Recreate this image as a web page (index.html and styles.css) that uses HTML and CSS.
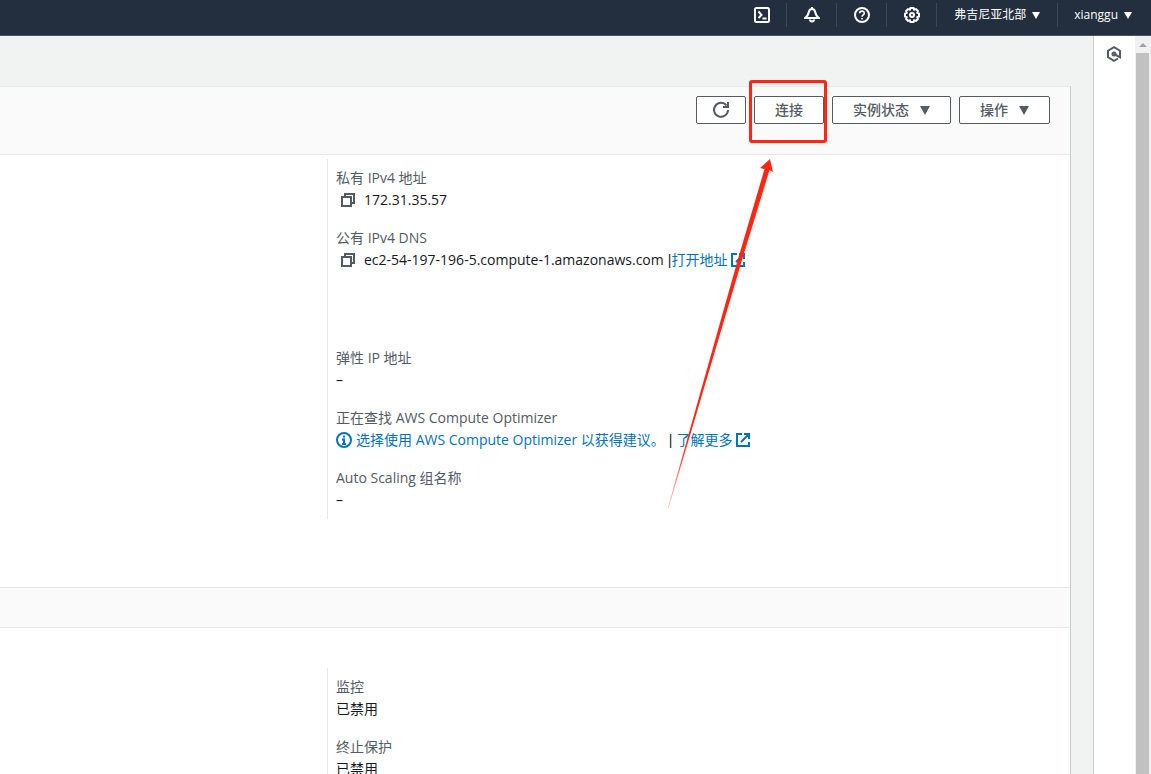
FILE: index.html
```html
<!DOCTYPE html>
<html lang="zh-CN">
<head>
<meta charset="utf-8">
<title>EC2 实例</title>
<link rel="stylesheet" href="styles.css">
</head>
<body>
<svg class="defs" aria-hidden="true">
  <symbol id="copy" viewBox="0 0 16 16"><path d="M2 5h9v9H2zM5 5V2h9v9h-3" fill="none" stroke="currentColor" stroke-width="2"/></symbol>
  <symbol id="external" viewBox="0 0 16 16"><path d="M7 2H2v12h12v-4M9 2h5v5M14 2L6 10" fill="none" stroke="currentColor" stroke-width="2"/></symbol>
</svg>
<header class="topbar">
  <button class="nav-btn" aria-label="CloudShell"><svg class="icon" viewBox="0 0 16 16"><rect x="1" y="1" width="14" height="14" rx="1.5"/><path d="M4.500 4.500L7.500 8L4.500 11M8.500 11.500h4"/></svg></button>
  <button class="nav-btn" aria-label="通知"><svg class="icon" viewBox="0 0 16 16"><path d="M1 11C4 9 4.500 7 5 4.500C5.500 2.500 6.500 2 8 2S10.500 2.500 11 4.500C11.500 7 12 9 15 11zM8 0v2"/><path d="M6 12.500a2 2 0 0 0 4 0"/></svg></button>
  <button class="nav-btn" aria-label="帮助"><svg class="icon" viewBox="0 0 16 16"><circle cx="8" cy="8" r="7"/><path class="fine" d="M5.700 6.300C5.700 3.300 10.400 3.400 10.300 6.200C10.300 7.800 8 7.800 8 9.700M8 10.900v1.700"/></svg></button>
  <button class="nav-btn" aria-label="设置"><svg class="icon" viewBox="0 0 16 16"><path d="M6.500 1h3l.7 1.700 1.800-.6 1.900 1.900-.6 1.800 1.700.7v3l-1.700.7.6 1.800-1.900 1.900-1.800-.6-.7 1.700h-3l-.7-1.700-1.800.6-1.900-1.900.6-1.800L1 9.500v-3l1.700-.7L2.100 4 4 2.100l1.800.6z"/><circle cx="8" cy="8" r="2"/></svg></button>
  <button class="nav-btn nav-menu">弗吉尼亚北部<svg class="caret" viewBox="0 0 8 7"><path d="M0 0h8L4 7z"/></svg></button>
  <button class="nav-btn nav-menu">xianggu<svg class="caret" viewBox="0 0 8 7"><path d="M0 0h8L4 7z"/></svg></button>
</header>
<div class="shell">
  <main class="content">
    <section class="card">
      <div class="card-head">
        <button class="btn btn-icon" aria-label="刷新"><svg class="refresh" viewBox="0 0 18 18"><path d="M14.500 4.500A7 7 0 1 0 16 9M16 1v5h-5"/></svg></button>
        <button class="btn">连接</button>
        <button class="btn">实例状态<svg class="btn-caret" viewBox="0 0 10 9"><path d="M0 0h10L5 9z"/></svg></button>
        <button class="btn">操作<svg class="btn-caret" viewBox="0 0 10 9"><path d="M0 0h10L5 9z"/></svg></button>
      </div>
      <div class="details">
        <dl class="column">
          <div class="pair"><dt>私有 IPv4 地址</dt><dd><button class="copy" aria-label="复制"><svg class="glyph"><use href="#copy"/></svg></button>172.31.35.57</dd></div>
          <div class="pair"><dt>公有 IPv4 DNS</dt><dd><button class="copy" aria-label="复制"><svg class="glyph"><use href="#copy"/></svg></button>ec2-54-197-196-5.compute-1.amazonaws.com<span class="bar bar-tight">|</span><a href="#">打开地址<svg class="glyph ext"><use href="#external"/></svg></a></dd></div>
          <div class="pair"></div>
          <div class="pair"><dt>弹性 IP 地址</dt><dd>–</dd></div>
          <div class="pair"><dt>正在查找 AWS Compute Optimizer</dt><dd><a href="#"><svg class="info" viewBox="0 0 16 16"><circle cx="8" cy="8" r="7"/><path d="M8 3.500v2M6 7.500h2V12M6 12h4"/></svg>选择使用 AWS Compute Optimizer 以获得建议。</a><span class="bar">|</span><a href="#">了解更多<svg class="glyph ext"><use href="#external"/></svg></a></dd></div>
          <div class="pair"><dt>Auto Scaling 组名称</dt><dd>–</dd></div>
        </dl>
      </div>
      <div class="band"></div>
      <div class="details details-more">
        <dl class="column">
          <div class="pair"><dt>监控</dt><dd>已禁用</dd></div>
          <div class="pair"><dt>终止保护</dt><dd>已禁用</dd></div>
        </dl>
      </div>
    </section>
  </main>
  <aside class="tools">
    <button class="tool-btn" aria-label="工具"><svg class="hex" viewBox="0 0 16 16"><path d="M14 8V4.700L8 1.200 2 4.700v6.600l6 3.500 4-2.300"/><path d="M8 8l6 3.300V8"/><circle cx="8" cy="8" r="1.500"/></svg></button>
  </aside>
  <div class="scrollbar"><svg class="up" viewBox="0 0 8 4"><path d="M0 4L4 0l4 4z"/></svg><div class="thumb"></div></div>
</div>
<svg class="annotation" width="1151" height="774" aria-hidden="true">
  <defs><linearGradient id="fade" gradientUnits="userSpaceOnUse" x1="668" y1="508" x2="688" y2="440"><stop offset="0" stop-color="#ff2512" stop-opacity="0.3"/><stop offset="1" stop-color="#ff2512"/></linearGradient></defs>
  <rect x="750.5" y="81.500" width="75" height="60" rx="1.500"/>
  <path d="M770 159L773 172L769.500 170L742 260L668.500 508L667.800 508L738 259L764.500 169L760 168z"/>
</svg>
</body>
</html>
```
FILE: styles.css
```css
* { box-sizing: border-box; }
body {
  margin: 0;
  height: 100vh;
  overflow: hidden;
  display: flex;
  flex-direction: column;
  position: relative;
  background: #f2f3f3;
  color: #16191f;
  font: 14px/22px "Open Sans", "Noto Sans CJK SC", sans-serif;
}
button { font: inherit; color: inherit; cursor: pointer; margin: 0; }
a { color: #0073bb; text-decoration: none; display: inline-flex; align-items: center; }
.defs { position: absolute; width: 0; height: 0; }

.topbar {
  display: flex;
  flex: none;
  justify-content: flex-end;
  height: 36px;
  padding: 3px 2px 8px 0;
  background: #232f3e;
  border-bottom: 1px solid #4a545e;
  color: #fff;
}
.nav-btn {
  width: 50px;
  padding: 0;
  border: 0;
  border-right: 1px solid #414750;
  background: none;
  display: flex;
  align-items: center;
  justify-content: center;
}
.nav-menu { width: auto; padding: 0 17px; gap: 6px; font-size: 12px; line-height: 18px; }
.nav-menu:last-child { border-right: 0; padding-left: 16px; }
.icon { width: 16px; height: 16px; fill: none; stroke: #fff; stroke-width: 2; }
.fine { stroke-width: 1.6; }
.caret { width: 8px; height: 7px; fill: #fff; }

.shell { flex: 1; display: flex; min-height: 0; }
.content { flex: 1; padding: 50px 22px 0 0; overflow: hidden; background: #f1f3f3; }
.card { background: #fff; border-top: 1px solid #e6eaea; border-right: 1px solid #c8cccc; }
.card-head {
  display: flex;
  justify-content: flex-end;
  gap: 8px;
  height: 68px;
  padding: 9px 20px 0 0;
  background: #fafafa;
  border-bottom: 1px solid #e5e9e9;
}
.btn {
  height: 28px;
  padding: 0 20px;
  border: 1px solid #545b64;
  border-radius: 2px;
  background: #fff;
  color: #545b64;
  font-weight: 500;
  display: flex;
  align-items: center;
  gap: 11px;
}
.btn-icon { padding: 0 15px; }
.btn-caret { width: 10px; height: 9px; fill: #545b64; }
.refresh { width: 18px; height: 18px; fill: none; stroke: #545b64; stroke-width: 2; }

.details { display: grid; grid-template-columns: 327px 1fr; padding: 4px 0 68px; }
.details-more { padding-top: 40px; }
.column { grid-column: 2; margin: 0; border-left: 1px solid #e6e9e9; }
.pair { height: 60px; padding: 8px; }
dt { color: #545b64; }
dd { margin: 0; display: flex; align-items: center; height: 22px; white-space: pre; color: #16191f; }
.copy { border: 0; padding: 0 8px 0 4px; background: none; color: #545b64; display: flex; }
.glyph { width: 16px; height: 16px; }
.ext { margin-left: 3px; }
.info { width: 16px; height: 16px; margin-right: 4px; fill: none; stroke: #0073bb; stroke-width: 2; }
.bar { margin: 0 4px; font-family: "Liberation Sans", sans-serif; }
.bar-tight { margin: 0 0 0 4px; }
.band { height: 41px; background: #fafafa; border: solid #e6e8e8; border-width: 1px 0; }

.tools { width: 42px; background: #fff; border-left: 1px solid #c8cccc; padding: 10px 2px 0 0; }
.tool-btn { display: flex; width: 100%; justify-content: center; border: 0; padding: 0; background: none; }
.hex { width: 16px; height: 16px; fill: none; stroke: #545b64; stroke-width: 2; }
.scrollbar { width: 16px; background: #f1f1f1; padding: 0 2px 0 1px; display: flex; flex-direction: column; align-items: center; }
.up { width: 8px; height: 4px; margin: 7px 0 6px; fill: #a3a3a3; flex: none; }
.thumb { width: 13px; flex: 1; background: #c1c1c1; }

.annotation { position: absolute; left: 0; top: 0; pointer-events: none; }
.annotation rect { fill: none; stroke: #ff2512; stroke-width: 3; }
.annotation path { fill: url(#fade); }
```
